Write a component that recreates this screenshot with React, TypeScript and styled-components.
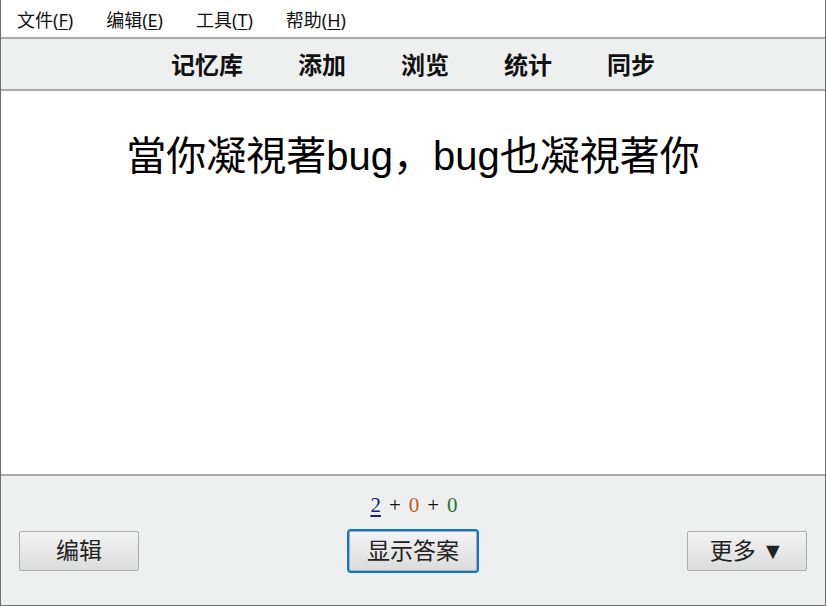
import React from "react";
import styled, { createGlobalStyle } from "styled-components";

const Global = createGlobalStyle`
  html, body { margin: 0; padding: 0; background: #ffffff; }
  body { font-family: "Noto Sans", "Noto Sans CJK SC", sans-serif; }
  * { box-sizing: border-box; }
`;

const Window = styled.div`
  width: 826px;
  height: 606px;
  display: flex;
  flex-direction: column;
  border-left: 1px solid #6e6e6e;
  border-right: 1px solid #6e6e6e;
  border-bottom: 1px solid #6e6e6e;
  background: #ffffff;
`;

const MenuBar = styled.div`
  height: 37px;
  display: flex;
  align-items: center;
  padding-left: 16px;
  padding-top: 2px;
  gap: 33px;
  background: #ffffff;
`;

const MenuItem = styled.span`
  font-family: "Noto Sans", "Noto Sans CJK SC", sans-serif;
  font-size: 18px;
  color: #111;
  line-height: 22px;
  & u { text-underline-offset: 2px; }
`;

const Toolbar = styled.nav`
  height: 54px;
  border-top: 2px solid #a9a9a9;
  border-bottom: 2px solid #a9a9a9;
  background: #eef0ef;
  display: flex;
  align-items: center;
  justify-content: center;
  gap: 55px;
`;

const ToolLink = styled.span`
  font-family: "Noto Sans CJK SC", sans-serif;
  font-weight: 700;
  font-size: 24px;
  color: #111;
  line-height: 30px;
`;

const Content = styled.main`
  flex: 1;
  background: #ffffff;
  padding-top: 40px;
  text-align: center;
`;

const Question = styled.div`
  font-family: "Liberation Sans", "Noto Sans CJK SC", sans-serif;
  font-size: 40px;
  line-height: 50px;
  color: #000;
`;

const Bottom = styled.footer`
  height: 131px;
  border-top: 2px solid #a9a9a9;
  background: #eef0ef;
  display: flex;
  flex-direction: column;
  padding: 17px 18px 0 18px;
`;

const Counts = styled.div`
  height: 24px;
  display: flex;
  justify-content: center;
  align-items: center;
  gap: 8px;
  font-family: "Liberation Serif", serif;
  font-size: 21px;
  margin-left: 2px;
`;

const Count = styled.span<{ $color: string; $underline?: boolean }>`
  color: ${(p) => p.$color};
  text-decoration: ${(p) => (p.$underline ? "underline" : "none")};
  text-underline-offset: 3px;
`;

const Buttons = styled.div`
  margin-top: 12px;
  height: 44px;
  display: flex;
  align-items: center;
  justify-content: space-between;
`;

const Button = styled.button<{ $focused?: boolean }>`
  height: 40px;
  min-width: 120px;
  padding: 0 17px;
  margin: 0 ${(p) => (p.$focused ? "2px" : "0")};
  border: 1px solid #adadad;
  border-radius: 2px;
  background: linear-gradient(#f3f3f3, #dcdcdc);
  font-family: "Liberation Serif", "Noto Sans CJK SC", serif;
  font-size: 23px;
  color: #222;
  line-height: 1;
  outline: ${(p) => (p.$focused ? "2px solid #0a78d6" : "none")};
  outline-offset: 0;
  cursor: default;
`;

export default function App() {
  return (
    <>
      <Global />
      <Window>
        <MenuBar>
          <MenuItem>文件(<u>F</u>)</MenuItem>
          <MenuItem>编辑(<u>E</u>)</MenuItem>
          <MenuItem>工具(<u>T</u>)</MenuItem>
          <MenuItem>帮助(<u>H</u>)</MenuItem>
        </MenuBar>
        <Toolbar>
          <ToolLink>记忆库</ToolLink>
          <ToolLink>添加</ToolLink>
          <ToolLink>浏览</ToolLink>
          <ToolLink>统计</ToolLink>
          <ToolLink>同步</ToolLink>
        </Toolbar>
        <Content>
          <Question>當你凝視著bug，bug也凝視著你</Question>
        </Content>
        <Bottom>
          <Counts>
            <Count $color="#1a1a8a" $underline>2</Count>
            <Count $color="#111">+</Count>
            <Count $color="#c0601a">0</Count>
            <Count $color="#111">+</Count>
            <Count $color="#1a7a2a">0</Count>
          </Counts>
          <Buttons>
            <Button>编辑</Button>
            <Button $focused>显示答案</Button>
            <Button>更多 ▼</Button>
          </Buttons>
        </Bottom>
      </Window>
    </>
  );
}
